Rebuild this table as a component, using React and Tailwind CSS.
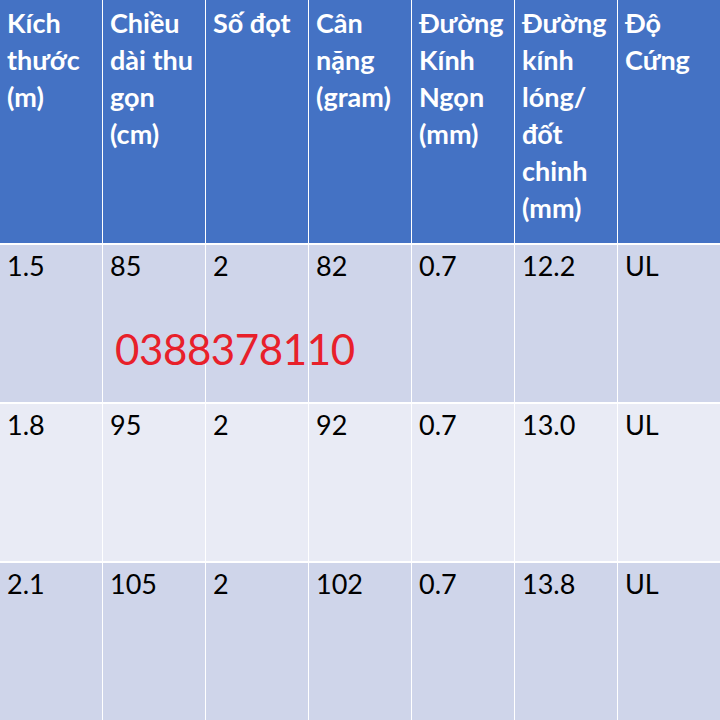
import React from "react";

const headers = [
  ["Kích", "thước", "(m)"],
  ["Chiều", "dài thu", "gọn", "(cm)"],
  ["Số đọt"],
  ["Cân", "nặng", "(gram)"],
  ["Đường", "Kính", "Ngọn", "(mm)"],
  ["Đường", "kính", "lóng/", "đốt", "chinh", "(mm)"],
  ["Độ", "Cứng"],
];

const rows = [
  ["1.5", "85", "2", "82", "0.7", "12.2", "UL"],
  ["1.8", "95", "2", "92", "0.7", "13.0", "UL"],
  ["2.1", "105", "2", "102", "0.7", "13.8", "UL"],
];

export default function App() {
  return (
    <div
      className="relative w-[720px] h-[720px] bg-white overflow-hidden"
      style={{ fontFamily: "Lato, 'Open Sans', sans-serif" }}
    >
      <div className="grid grid-cols-[repeat(7,102px)] grid-rows-[243px_157px_157px_157px] gap-x-px gap-y-[2px]">
        {headers.map((lines, i) => (
          <div
            key={"h" + i}
            className="bg-[#4472c4] text-white font-bold text-[27px] leading-[37px] pl-[7px] pt-[4px]"
          >
            {lines.map((l, j) => (
              <div key={j} className="whitespace-nowrap">
                {l}
              </div>
            ))}
          </div>
        ))}
        {rows.map((r, ri) =>
          r.map((c, ci) => (
            <div
              key={ri + "-" + ci}
              className={
                (ri === 1 ? "bg-[#e9ebf5]" : "bg-[#cfd5ea]") +
                " text-black text-[27px] leading-[37px] pl-[7px] pt-[2px]"
              }
            >
              {c}
            </div>
          ))
        )}
      </div>
      <div className="absolute left-[115px] top-[323px] text-[#e8202a] text-[42px] leading-[52px] tracking-[-0.4px]">
        0388378110
      </div>
    </div>
  );
}
